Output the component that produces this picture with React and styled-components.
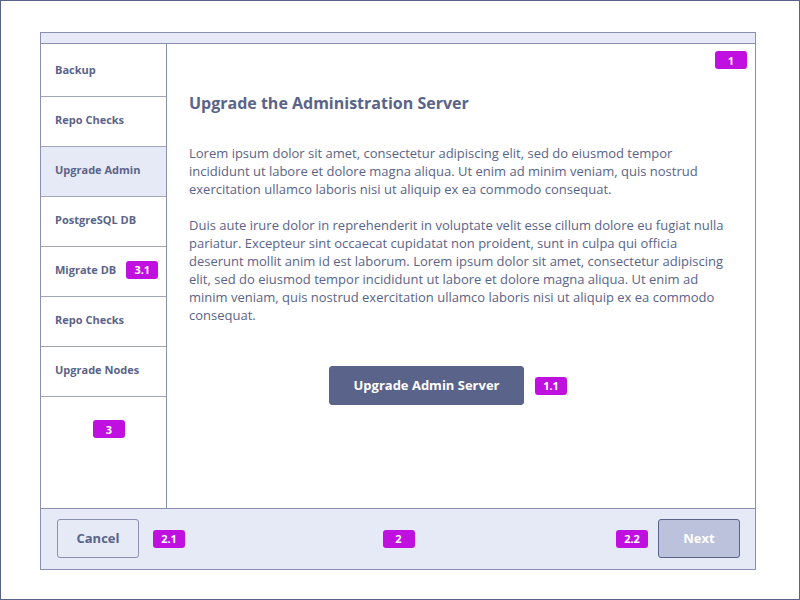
import React from "react";
import styled, { createGlobalStyle } from "styled-components";

const Global = createGlobalStyle`
  html, body { margin: 0; padding: 0; background: #fff; }
  body { font-family: "Open Sans", "Noto Sans", sans-serif; }
`;

const INK = "#5a6389";
const LINE = "#8a90b0";
const TINT = "#e6eaf6";

const Page = styled.div`
  width: 800px;
  height: 600px;
  box-sizing: border-box;
  border: 1px solid ${INK};
  padding: 31px 0 0 39px;
`;

const Panel = styled.div`
  width: 716px;
  height: 538px;
  box-sizing: border-box;
  border: 1px solid ${LINE};
  display: flex;
  flex-direction: column;
`;

const TopBar = styled.div`
  height: 11px;
  box-sizing: border-box;
  background: ${TINT};
  border-bottom: 1px solid ${LINE};
`;

const Body = styled.div`
  flex: 1;
  display: flex;
  min-height: 0;
`;

const Sidebar = styled.nav`
  position: relative;
  width: 126px;
  box-sizing: border-box;
  border-right: 1px solid ${LINE};
  padding-top: 3px;
  display: flex;
  flex-direction: column;
`;

const NavItem = styled.div`
  height: 50px;
  box-sizing: border-box;
  border-bottom: 1px solid #a3a6b4;
  background: ${(p) => (p.$active ? TINT : "transparent")};
  display: flex;
  align-items: center;
  gap: 10px;
  padding: 0 0 4px 14px;
  font-size: 11px;
  font-weight: 700;
  color: ${INK};
`;

const Badge = styled.span`
  display: inline-flex;
  align-items: center;
  justify-content: center;
  width: 32px;
  height: 18px;
  border-radius: 3px;
  background: #c010e0;
  color: #fff;
  font-size: 11px;
  font-weight: 700;
  line-height: 1;
  flex-shrink: 0;
`;

const FloatBadge = styled(Badge)`
  position: absolute;
  top: ${(p) => p.$top}px;
  ${(p) => (p.$left != null ? `left: ${p.$left}px;` : "")}
  ${(p) => (p.$right != null ? `right: ${p.$right}px;` : "")}
`;

const Main = styled.main`
  position: relative;
  flex: 1;
  padding: 48px 22px 0;
  color: ${INK};
`;

const Title = styled.h1`
  margin: 0;
  font-size: 16px;
  line-height: 22px;
  font-weight: 700;
  color: ${INK};
`;

const Para = styled.p`
  margin: ${(p) => p.$mt}px 0 0;
  font-size: 13px;
  line-height: 18px;
  color: ${INK};
`;

const Line = styled.span`
  display: block;
  white-space: nowrap;
`;

const ActionRow = styled.div`
  margin: 42px 0 0 140px;
  display: flex;
  align-items: center;
  gap: 11px;
`;

const Button = styled.button`
  height: 39px;
  box-sizing: border-box;
  border-radius: 3px;
  font-family: inherit;
  font-size: 13px;
  font-weight: 700;
  padding: 0 0 2px;
  width: ${(p) => p.$w}px;
  border: 1px solid ${(p) => p.$border};
  background: ${(p) => p.$bg};
  color: ${(p) => p.$fg};
  cursor: pointer;
`;

const Footer = styled.footer`
  height: 61px;
  box-sizing: border-box;
  border-top: 1px solid ${LINE};
  background: ${TINT};
  padding: 0 15px 1px 16px;
  display: grid;
  grid-template-columns: 1fr auto 1fr;
  align-items: center;
`;

const Group = styled.div`
  display: flex;
  align-items: center;
  gap: ${(p) => p.$gap}px;
  justify-content: ${(p) => (p.$end ? "flex-end" : "flex-start")};
`;

const steps = [
  { label: "Backup" },
  { label: "Repo Checks" },
  { label: "Upgrade Admin", active: true },
  { label: "PostgreSQL DB" },
  { label: "Migrate DB", badge: "3.1" },
  { label: "Repo Checks" },
  { label: "Upgrade Nodes" },
];

export default function App() {
  return (
    <>
      <Global />
      <Page>
        <Panel>
          <TopBar />
          <Body>
            <Sidebar>
              {steps.map((s, i) => (
                <NavItem key={i} $active={s.active}>
                  {s.label}
                  {s.badge && <Badge>{s.badge}</Badge>}
                </NavItem>
              ))}
              <FloatBadge $top={376} $left={52}>3</FloatBadge>
            </Sidebar>
            <Main>
              <FloatBadge $top={7} $right={8}>1</FloatBadge>
              <Title>Upgrade the Administration Server</Title>
              <Para $mt={30}>
                <Line>Lorem ipsum dolor sit amet, consectetur adipiscing elit, sed do eiusmod tempor</Line>
                <Line>incididunt ut labore et dolore magna aliqua. Ut enim ad minim veniam, quis nostrud</Line>
                <Line>exercitation ullamco laboris nisi ut aliquip ex ea commodo consequat.</Line>
              </Para>
              <Para $mt={18}>
                <Line>Duis aute irure dolor in reprehenderit in voluptate velit esse cillum dolore eu fugiat nulla</Line>
                <Line>pariatur. Excepteur sint occaecat cupidatat non proident, sunt in culpa qui officia</Line>
                <Line>deserunt mollit anim id est laborum. Lorem ipsum dolor sit amet, consectetur adipiscing</Line>
                <Line>elit, sed do eiusmod tempor incididunt ut labore et dolore magna aliqua. Ut enim ad</Line>
                <Line>minim veniam, quis nostrud exercitation ullamco laboris nisi ut aliquip ex ea commodo</Line>
                <Line>consequat.</Line>
              </Para>
              <ActionRow>
                <Button $w={195} $bg={INK} $fg="#fff" $border={INK}>Upgrade Admin Server</Button>
                <Badge>1.1</Badge>
              </ActionRow>
            </Main>
          </Body>
          <Footer>
            <Group $gap={14}>
              <Button $w={82} $bg={TINT} $fg={INK} $border={LINE}>Cancel</Button>
              <Badge>2.1</Badge>
            </Group>
            <Badge>2</Badge>
            <Group $gap={10} $end>
              <Badge>2.2</Badge>
              <Button $w={82} $bg="#bcc1dc" $fg="#fff" $border={INK}>Next</Button>
            </Group>
          </Footer>
        </Panel>
      </Page>
    </>
  );
}
